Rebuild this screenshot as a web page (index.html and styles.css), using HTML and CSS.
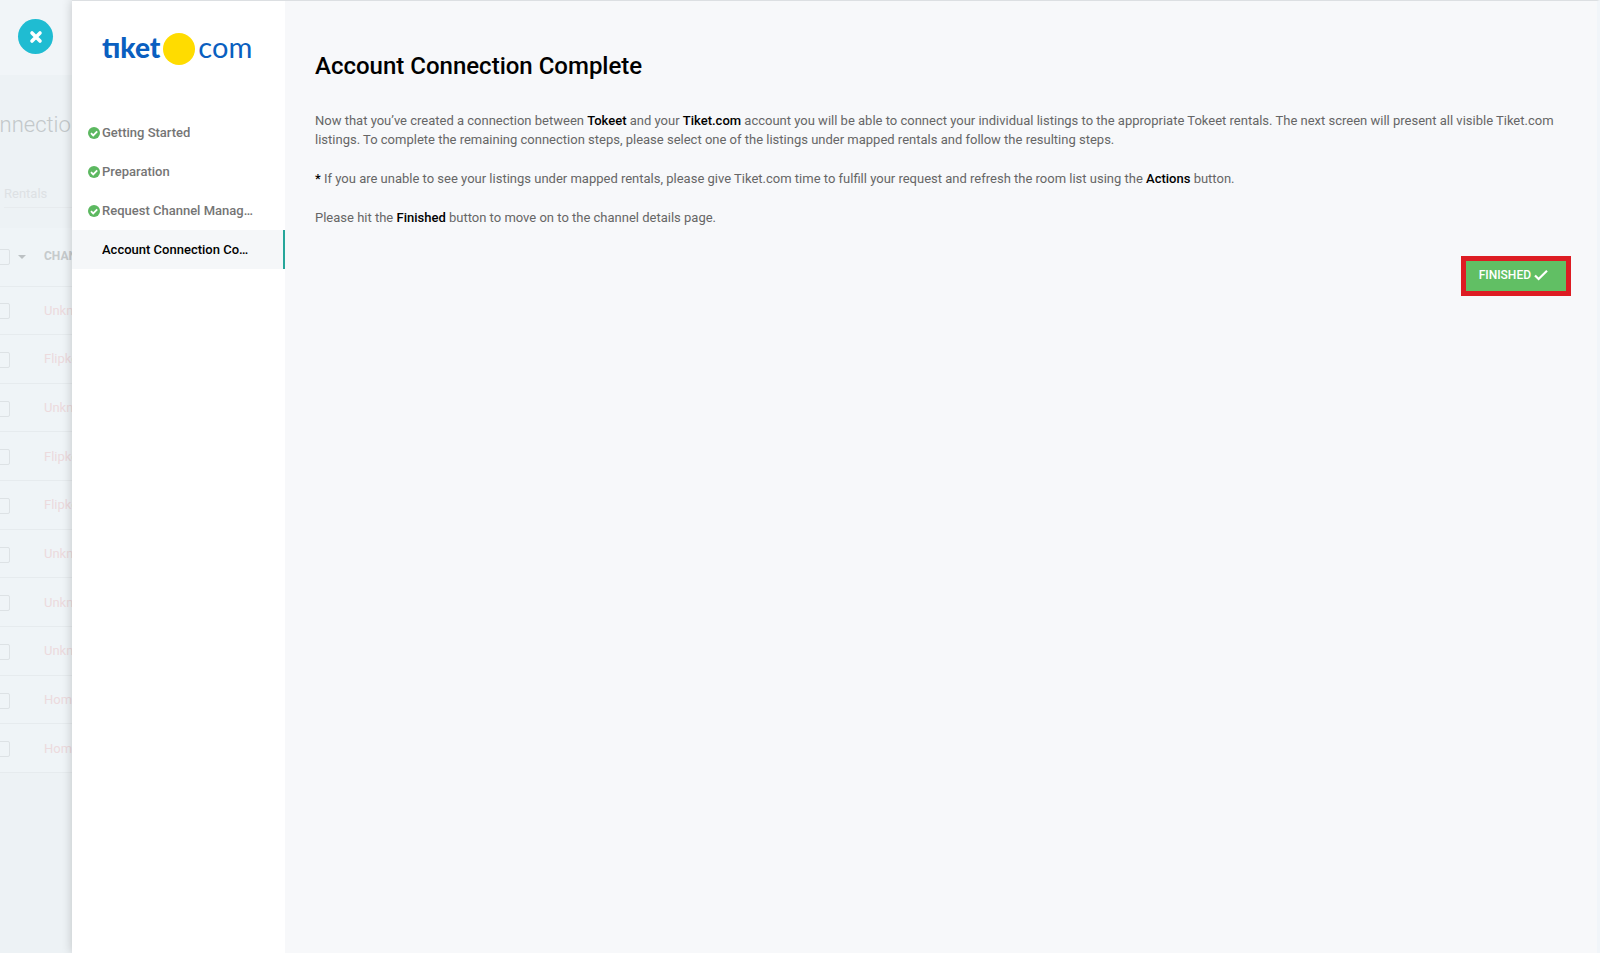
FILE: index.html
```html
<!DOCTYPE html>
<html lang="en">
<head>
    <meta charset="UTF-8">
    <meta name="viewport" content="width=device-width, initial-scale=1.0">
    <title>Account Connection Complete</title>
    <link rel="stylesheet" href="styles.css">
</head>
<body>
    <div class="backdrop">
        <div class="topbar">
            <button class="close-button" type="button" aria-label="Close">
                <svg width="14" height="14" viewBox="0 0 14 14"><path d="M3 3l8 8M11 3l-8 8" stroke="#fff" stroke-width="3.6" stroke-linecap="round"/></svg>
            </button>
        </div>
        <div class="page-title">Connections</div>
        <div class="filter">Rentals</div>
        <table class="channels">
            <thead>
                <tr>
                    <th class="check"><input type="checkbox" aria-label="Select all"><span class="caret"></span></th>
                    <th>CHANNEL</th>
                </tr>
            </thead>
            <tbody>
                <tr><td class="check"><input type="checkbox" aria-label="Select row"></td><td>Unknown</td></tr>
                <tr><td class="check"><input type="checkbox" aria-label="Select row"></td><td>Flipkey</td></tr>
                <tr><td class="check"><input type="checkbox" aria-label="Select row"></td><td>Unknown</td></tr>
                <tr><td class="check"><input type="checkbox" aria-label="Select row"></td><td>Flipkey</td></tr>
                <tr><td class="check"><input type="checkbox" aria-label="Select row"></td><td>Flipkey</td></tr>
                <tr><td class="check"><input type="checkbox" aria-label="Select row"></td><td>Unknown</td></tr>
                <tr><td class="check"><input type="checkbox" aria-label="Select row"></td><td>Unknown</td></tr>
                <tr><td class="check"><input type="checkbox" aria-label="Select row"></td><td>Unknown</td></tr>
                <tr><td class="check"><input type="checkbox" aria-label="Select row"></td><td>HomeAway</td></tr>
                <tr><td class="check"><input type="checkbox" aria-label="Select row"></td><td>HomeAway</td></tr>
            </tbody>
        </table>
    </div>

    <div class="panel">
        <nav class="sidebar">
            <div class="logo">
                <span class="logo-name">tıket</span>
                <span class="logo-dot"></span>
                <span class="logo-com">com</span>
            </div>
            <ul class="steps">
                <li class="step">
                    <svg class="step-icon" viewBox="0 0 12 12"><circle cx="6" cy="6" r="6" fill="#5cb860"/><path d="M3 6.2l2.2 2.2 4-4" fill="none" stroke="#fff" stroke-width="1.8"/></svg>
                    <span class="step-label">Getting Started</span>
                </li>
                <li class="step">
                    <svg class="step-icon" viewBox="0 0 12 12"><circle cx="6" cy="6" r="6" fill="#5cb860"/><path d="M3 6.2l2.2 2.2 4-4" fill="none" stroke="#fff" stroke-width="1.8"/></svg>
                    <span class="step-label">Preparation</span>
                </li>
                <li class="step">
                    <svg class="step-icon" viewBox="0 0 12 12"><circle cx="6" cy="6" r="6" fill="#5cb860"/><path d="M3 6.2l2.2 2.2 4-4" fill="none" stroke="#fff" stroke-width="1.8"/></svg>
                    <span class="step-label">Request Channel Manager</span>
                </li>
                <li class="step active">
                    <span class="step-icon"></span>
                    <span class="step-label">Account Connection Complete</span>
                </li>
            </ul>
        </nav>

        <main class="content">
            <h1>Account Connection Complete</h1>
            <p>Now that you’ve created a connection between <b>Tokeet</b> and your <b>Tiket.com</b> account you will be able to connect your individual listings to the appropriate Tokeet rentals. The next screen will present all visible Tiket.com listings. To complete the remaining connection steps, please select one of the listings under mapped rentals and follow the resulting steps.</p>
            <p><b>*</b> If you are unable to see your listings under mapped rentals, please give Tiket.com time to fulfill your request and refresh the room list using the <b>Actions</b> button.</p>
            <p>Please hit the <b>Finished</b> button to move on to the channel details page.</p>
            <div class="actions">
                <button class="finish-button" type="button">
                    FINISHED
                    <svg width="14" height="12" viewBox="0 0 14 12"><path d="M1 6.5l3.6 3.5L13 1.8" fill="none" stroke="#fff" stroke-width="2.2"/></svg>
                </button>
            </div>
        </main>
    </div>
</body>
</html>
```

FILE: styles.css
```css
* {
    box-sizing: border-box;
}

body {
    font-family: Roboto, "Liberation Sans", sans-serif;
    font-size: 13px;
    line-height: 19px;
    margin: 0;
    display: flex;
    min-height: 100vh;
    background-color: #edf2f5;
}

/* faded page behind the panel */
.backdrop {
    width: 72px;
    flex-shrink: 0;
    overflow: hidden;
    color: #d0d4d6;
}

.topbar {
    height: 75px;
    padding: 19px 18px;
    background-color: #f1f5f8;
}

.close-button {
    width: 35px;
    height: 35px;
    padding: 0;
    border: none;
    border-radius: 50%;
    background-color: #1fbcd2;
    display: flex;
    align-items: center;
    justify-content: center;
    cursor: pointer;
}

.page-title {
    height: 97px;
    margin-left: -27px;
    padding-top: 36px;
    font-size: 22px;
    font-weight: 300;
    line-height: 28px;
    color: #c3c8ca;
}

.filter {
    height: 36px;
    margin: 12px 0 8px 4px;
    line-height: 20px;
    color: #dde1e4;
}

.filter::after {
    content: "";
    display: block;
    margin-top: 3px;
    border-bottom: 1px solid #e7ebee;
}

.channels {
    width: 200px;
    height: 545px;
    table-layout: fixed;
    border-collapse: collapse;
    background-color: #eff4f7;
}

.channels th,
.channels td {
    padding: 0;
    text-align: left;
    border-bottom: 1px solid #e6ebee;
}

.channels thead th {
    height: 58px;
    font-weight: 700;
    font-size: 12px;
    color: #c6cacc;
}

.channels td {
    color: #ecdadd;
}

.channels .check {
    width: 44px;
}

.channels input {
    appearance: none;
    width: 16px;
    height: 16px;
    margin: 0 0 0 -6px;
    border: 1px solid #dde2e5;
    border-radius: 2px;
    vertical-align: middle;
}

.caret {
    display: inline-block;
    margin-left: 8px;
    border: 4px solid transparent;
    border-top-color: #bcc1c4;
    border-bottom: none;
    vertical-align: middle;
}

.panel {
    flex: 1;
    display: flex;
    min-width: 0;
    border-top: 1px solid #dcdfe2;
    border-right: 3px solid #f1f5f9;
    background-color: #f7f8fa;
    box-shadow: 0 0 10px rgba(0, 0, 0, 0.2);
}

.sidebar {
    width: 213px;
    flex-shrink: 0;
    background-color: #fff;
}

.logo {
    display: flex;
    align-items: center;
    height: 112px;
    padding: 0 0 16px 30px;
    font-family: Lato, sans-serif;
    font-size: 28px;
    line-height: 36px;
    color: #0a5fc0;
}

.logo-name,
.logo-com {
    padding-bottom: 4px;
}

.logo-name {
    font-weight: 900;
}

.logo-com {
    font-size: 29px;
}

.logo-dot {
    width: 32px;
    height: 32px;
    margin: 0 3px;
    border-radius: 50%;
    background-color: #ffdc00;
}

.steps {
    margin: 0;
    padding: 0;
    list-style: none;
}

.step {
    display: flex;
    align-items: center;
    height: 39px;
    padding: 0 32px 0 16px;
    font-weight: 500;
    color: #757575;
}

.step-icon {
    width: 12px;
    height: 12px;
    margin-right: 2px;
    flex-shrink: 0;
}

.step-label {
    overflow: hidden;
    white-space: nowrap;
    text-overflow: ellipsis;
}

.step.active {
    background-color: #f5f7f9;
    border-right: 2px solid #26a69a;
    color: #000;
}

.content {
    flex: 1;
    min-width: 0;
    padding: 49px 26px 0 30px;
    color: #666;
}

h1 {
    margin: 0 0 29px;
    font-size: 24px;
    font-weight: 500;
    line-height: 32px;
    color: #000;
}

p {
    margin: 0 0 20px;
}

b {
    font-weight: 500;
    color: #000;
}

.actions {
    display: flex;
    justify-content: flex-end;
    padding-top: 9px;
}

.finish-button {
    display: flex;
    align-items: center;
    gap: 3px;
    height: 40px;
    padding: 0 18px 2px 13px;
    border: 5px solid #dd1c23;
    background-color: #61bf64;
    color: #fff;
    font-family: inherit;
    font-size: 12px;
    font-weight: 500;
    cursor: pointer;
}
```
